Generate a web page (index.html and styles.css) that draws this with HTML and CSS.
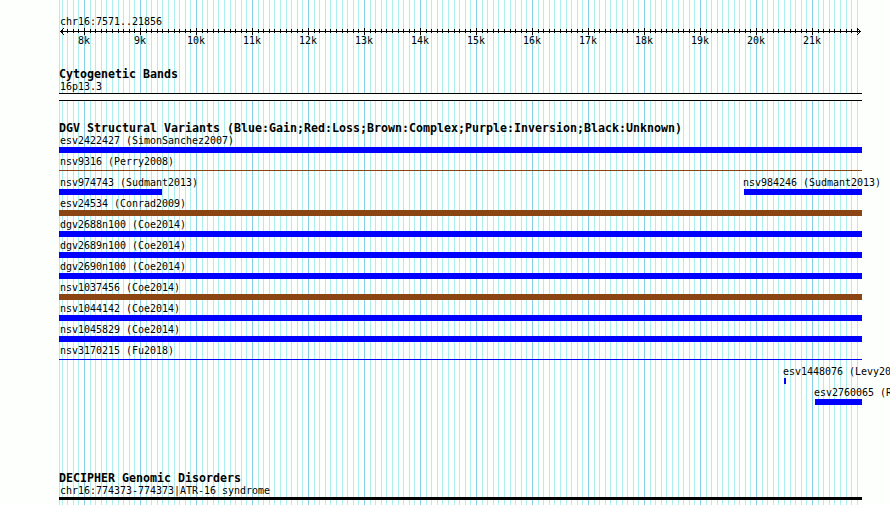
FILE: index.html
```html
<!DOCTYPE html>
<html lang="en">
<head>
    <meta charset="UTF-8">
    <title>chr16:7571..21856</title>
    <link rel="stylesheet" href="styles.css">
</head>
<body>

    <div class="panel">
        <div class="ruler">
            <div class="region">chr16:7571..21856</div>
            <svg class="axis" width="803" height="7" viewBox="0 0 803 7" shape-rendering="crispEdges">
                <defs>
                    <!-- one kilobase, ten minor ticks -->
                    <pattern id="ticks" x="25" y="0" width="56" height="7" patternUnits="userSpaceOnUse">
                        <path d="M0 0h1v7h-1zM6 1h1v4h-1zM11 1h1v4h-1zM17 1h1v4h-1zM22 1h1v4h-1zM28 1h1v4h-1zM34 1h1v4h-1zM39 1h1v4h-1zM45 1h1v4h-1zM50 1h1v4h-1z"/>
                    </pattern>
                </defs>
                <rect x="3" width="797" height="7" fill="url(#ticks)"/>
                <rect x="1" y="3" width="801" height="1"/>
                <path d="M2 2h1v1h-1zM3 1h1v1h-1zM4 0h1v1h-1zM2 4h1v1h-1zM3 5h1v1h-1zM4 6h1v1h-1z"/>
                <path d="M800 2h1v1h-1zM799 1h1v1h-1zM798 0h1v1h-1zM800 4h1v1h-1zM799 5h1v1h-1zM798 6h1v1h-1z"/>
            </svg>
            <div class="scale">
                <span>8k</span><span>9k</span><span>10k</span><span>11k</span><span>12k</span><span>13k</span><span>14k</span><span>15k</span><span>16k</span><span>17k</span><span>18k</span><span>19k</span><span>20k</span><span>21k</span>
            </div>
        </div>

        <div class="track bands">
            <h2>Cytogenetic Bands</h2>
            <div class="label">16p13.3</div>
            <div class="band"></div>
        </div>

        <div class="track variants">
            <h2>DGV Structural Variants (Blue:Gain;Red:Loss;Brown:Complex;Purple:Inversion;Black:Unknown)</h2>
            <div class="row"><div class="feature"><div class="label">esv2422427 (SimonSanchez2007)</div><div class="bar gain"></div></div></div>
            <div class="row"><div class="feature"><div class="label">nsv9316 (Perry2008)</div><div class="bar thin complex"></div></div></div>
            <div class="row">
                <div class="feature" style="width: 103px"><div class="label">nsv974743 (Sudmant2013)</div><div class="bar gain"></div></div>
                <div class="feature inner" style="width: 118px"><div class="label">nsv984246 (Sudmant2013)</div><div class="bar gain"></div></div>
            </div>
            <div class="row"><div class="feature"><div class="label">esv24534 (Conrad2009)</div><div class="bar complex"></div></div></div>
            <div class="row"><div class="feature"><div class="label">dgv2688n100 (Coe2014)</div><div class="bar gain"></div></div></div>
            <div class="row"><div class="feature"><div class="label">dgv2689n100 (Coe2014)</div><div class="bar gain"></div></div></div>
            <div class="row"><div class="feature"><div class="label">dgv2690n100 (Coe2014)</div><div class="bar gain"></div></div></div>
            <div class="row"><div class="feature"><div class="label">nsv1037456 (Coe2014)</div><div class="bar complex"></div></div></div>
            <div class="row"><div class="feature"><div class="label">nsv1044142 (Coe2014)</div><div class="bar gain"></div></div></div>
            <div class="row"><div class="feature"><div class="label">nsv1045829 (Coe2014)</div><div class="bar gain"></div></div></div>
            <div class="row"><div class="feature"><div class="label">nsv3170215 (Fu2018)</div><div class="bar thin gain"></div></div></div>
            <div class="row"><div class="feature inner" style="width: 2px; margin-left: 725px"><div class="label">esv1448076 (Levy2008)</div><div class="bar gain"></div></div></div>
            <div class="row"><div class="feature inner" style="width: 47px; margin-left: 756px"><div class="label">esv2760065 (Redon2006)</div><div class="bar gain"></div></div></div>
        </div>

        <div class="track disorders">
            <h2>DECIPHER Genomic Disorders</h2>
            <div class="label">chr16:774373-774373|ATR-16 syndrome</div>
            <div class="bar"></div>
        </div>
    </div>

</body>
</html>
```
FILE: styles.css
```css
:root {
    --paper: #fdfffc;
    --minor: #afeeee;
    --major: #87ceeb;
}

html {
    overflow: hidden;
    background: var(--paper);
}

body {
    margin: 0;
    height: 505px;
    overflow: hidden;
    color: #000;
    font-family: "DejaVu Sans Mono", "Liberation Mono", monospace;
    font-size: 9.97px;
}

/* gridlines: one 56px tile per kilobase */
.panel {
    box-sizing: border-box;
    width: 803px;
    height: 505px;
    margin-left: 59px;
    padding-top: 15px;
    background-image:
        linear-gradient(var(--minor), var(--minor)),
        linear-gradient(to right,
            var(--major) 1px, transparent 1px 6px,
            var(--minor) 6px 7px, transparent 7px 11px,
            var(--minor) 11px 12px, transparent 12px 17px,
            var(--minor) 17px 18px, transparent 18px 22px,
            var(--minor) 22px 23px, transparent 23px 28px,
            var(--minor) 28px 29px, transparent 29px 34px,
            var(--minor) 34px 35px, transparent 35px 39px,
            var(--minor) 39px 40px, transparent 40px 45px,
            var(--minor) 45px 46px, transparent 46px 50px,
            var(--minor) 50px 51px, transparent 51px);
    background-size: 1px 100%, 56px 100%;
    background-position: 0 0, 25px 0;
    background-repeat: no-repeat, repeat-x;
}

.region,
.label {
    padding-left: 1px;
    white-space: nowrap;
}

/* Ruler */
.ruler {
    height: 53px;
}

.region {
    height: 13px;
    line-height: 13px;
}

.axis {
    display: block;
}

.scale {
    display: flex;
    margin-left: -3px;
    width: 784px;
    line-height: 12px;
}

.scale span {
    width: 56px;
    text-align: center;
}

/* Tracks */
h2 {
    margin: 0;
    height: 10px;
    font-size: 11.63px;
    line-height: 12px;
    white-space: nowrap;
}

.label {
    box-sizing: border-box;
    height: 15px;
    padding-top: 2px;
    line-height: 14px;
}

.bands {
    height: 54px;
}

.band {
    height: 6px;
    border-top: 1px solid #000;
    border-bottom: 1px solid #000;
    background: var(--paper);
}

.variants {
    height: 350px;
}

.row {
    display: flex;
    justify-content: space-between;
    height: 21px;
}

.feature {
    width: 100%;
}

.inner .label {
    padding-left: 0;
    margin-left: -1px;
}

.bar {
    height: 6px;
}

.thin {
    height: 1px;
    margin-top: 2px;
}

.gain {
    background: #0000ff;
}

.complex {
    background: #8b4513;
}

.disorders .bar {
    height: 3px;
    background: #000;
}
```
